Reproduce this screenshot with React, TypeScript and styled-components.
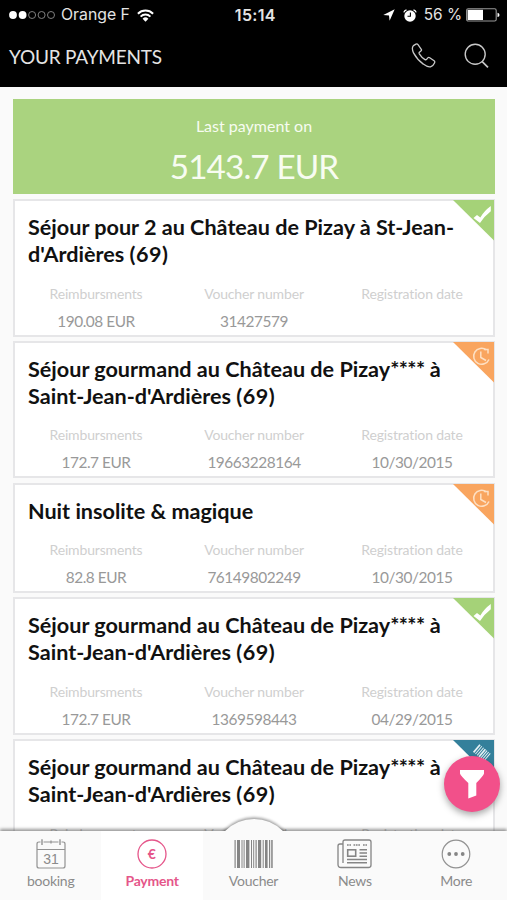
import React from "react";
import styled, { createGlobalStyle, css } from "styled-components";

const Global = createGlobalStyle`
  * { box-sizing: border-box; }
  body { margin: 0; background: #fafafa; font-family: Lato, "Open Sans", sans-serif; font-variant-ligatures: none; }
`;

const Screen = styled.div`
  width: 507px;
  height: 900px;
  display: flex;
  flex-direction: column;
  overflow: hidden;
  position: relative;
  background: #fafafa;
`;

const Header = styled.header`
  height: 87px;
  flex: none;
  background: #000;
  color: #e4e4e4;
`;

const StatusBar = styled.div`
  height: 30px;
  display: grid;
  grid-template-columns: 1fr auto 1fr;
  align-items: center;
  padding: 0 7px 0 9px;
  font-family: Inter, Roboto, sans-serif;
  font-size: 15.8px;
  line-height: 30px;
`;

const StatusGroup = styled.div<{ $end?: boolean }>`
  display: flex;
  align-items: center;
  justify-content: ${(p) => (p.$end ? "flex-end" : "flex-start")};
`;

const Carrier = styled.span`
  margin: 0 7px 0 5px;
  white-space: nowrap;
`;

const Clock = styled.span`
  font-weight: 600;
  font-size: 16px;
  letter-spacing: 0.3px;
  padding-left: 1.5px;
`;

const Percent = styled.span`
  margin: 0 4px 0 7px;
  font-size: 15.4px;
  white-space: nowrap;
`;

const TitleBar = styled.div`
  height: 54px;
  display: flex;
  align-items: center;
  padding: 0 18px 0 9px;
`;

const PageTitle = styled.h1`
  margin: 0;
  flex: 1;
  font-size: 19px;
  line-height: 24px;
  letter-spacing: -0.2px;
  font-weight: 400;
`;

const IconButton = styled.button`
  padding: 0;
  border: 0;
  background: none;
  display: flex;
  margin: -3px 0 0 28px;
`;

const Content = styled.main`
  flex: 1;
  min-height: 0;
  overflow: hidden;
  padding: 12px 12px 0 13px;
  display: flex;
  flex-direction: column;
`;

const Summary = styled.section`
  flex: none;
  height: 94.5px;
  margin-bottom: 5.5px;
  background: #aad37f;
  color: #f7fcf1;
  text-align: center;
  padding-top: 15px;
`;

const SummaryLabel = styled.div`
  font-size: 16px;
  line-height: 24px;
`;

const SummaryAmount = styled.div`
  font-size: 33.3px;
  line-height: 40px;
  letter-spacing: -0.9px;
  margin-top: 8px;
`;

const Card = styled.article`
  flex: none;
  position: relative;
  border: 2px solid #e6e6e8;
  background: #fff;
  padding: 13px 0 1px 13px;
  margin-bottom: 4.25px;
`;

const CardTitle = styled.h2`
  margin: 0 24px 0 0;
  font-size: 21.6px;
  line-height: 27px;
  font-weight: 700;
  color: #111;
  white-space: pre-line;
`;

const Stars = styled.span`
  letter-spacing: -0.6px;
`;

const Code = styled.span`
  letter-spacing: 0.5px;
`;

const Facts = styled.dl`
  margin: 11.5px 0 0;
  padding: 0 4px 0 0;
  display: grid;
  grid-template-columns: 136px 180px 136px;
  text-align: center;
`;

const Fact = styled.div`
  height: 54px;
`;

const FactLabel = styled.dt`
  font-size: 14px;
  line-height: 28px;
  letter-spacing: -0.16px;
  color: #cfcfcf;
  white-space: nowrap;
`;

const FactValue = styled.dd`
  margin: 0;
  font-size: 15.4px;
  line-height: 27px;
  letter-spacing: -0.45px;
  color: #999;
`;

const Corner = styled.svg`
  position: absolute;
  top: -1px;
  right: -1px;
`;

const FilterButton = styled.button`
  position: absolute;
  left: 444px;
  top: 756px;
  width: 56px;
  height: 56px;
  border: 0;
  padding: 0;
  border-radius: 50%;
  background: #f2508a;
  box-shadow: 0 3px 7px rgba(0, 0, 0, 0.35);
  display: flex;
  align-items: center;
  justify-content: center;
`;

const TabBar = styled.nav`
  flex: none;
  height: 69px;
  position: relative;
  display: grid;
  grid-template-columns: repeat(5, 1fr);
  background: #fafafa;
  box-shadow: 0 -2px 3px rgba(0, 0, 0, 0.4);
`;

const Bulge = styled.svg`
  position: absolute;
  left: 204px;
  top: -20px;
`;

const Tab = styled.a<{ $active?: boolean }>`
  position: relative;
  display: flex;
  flex-direction: column;
  align-items: center;
  padding-top: 8px;
  font-size: 14px;
  line-height: 20px;
  letter-spacing: -0.25px;
  color: #8b8b8b;
  ${(p) =>
    p.$active &&
    css`
      background: #fff;
      color: #e5568a;
      font-weight: 700;
    `}
`;

const TabLabel = styled.span`
  margin-top: 2px;
`;

type Status = "paid" | "pending" | "voucher";

const cornerColor: Record<Status, string> = {
  paid: "#a5d278",
  pending: "#f9a55f",
  voucher: "#34809b",
};

const StatusCorner = ({ status }: { status: Status }) => (
  <Corner width="41" height="41" viewBox="0 0 41 41">
    <path d="M0 0H41V40.5Z" fill={cornerColor[status]} />
    {status === "paid" && (
      <path d="M20.5 18L24 15L27.3 17.6Q31 11 37.8 6V11.2Q31.5 16 27 23Z" fill="#fff" />
    )}
    {status === "pending" && (
      <g fill="none" stroke="#fde0c4" strokeWidth="1.5">
        <path d="M33.4 7.8A8 8 0 1 0 36 17.5" />
        <path d="M30.8 7.6H35V11.6M27.8 9.5V15.5L33 18.5" />
      </g>
    )}
    {status === "voucher" && (
      <g stroke="#e5f1f5" transform="translate(28.7 12.7) rotate(40)">
        <path d="M-6.4 -5V5M0.6 -5V5" strokeWidth="1.7" />
        <path d="M-4 -5V5M-1.7 -5V5M2.8 -5V5M4.9 -5V5M7 -5V5" strokeWidth="1" />
      </g>
    )}
  </Corner>
);

interface Payment {
  title: string;
  amount: string;
  voucher: string;
  date: string;
  status: Status;
}

const gourmand = "Séjour gourmand au Château de Pizay**** à\nSaint-Jean-d'Ardières (69)";

const payments: Payment[] = [
  { title: "Séjour pour 2 au Château de Pizay à St-Jean-\nd'Ardières (69)", amount: "190.08 EUR", voucher: "31427579", date: "", status: "paid" },
  { title: gourmand, amount: "172.7 EUR", voucher: "19663228164", date: "10/30/2015", status: "pending" },
  { title: "Nuit insolite & magique", amount: "82.8 EUR", voucher: "76149802249", date: "10/30/2015", status: "pending" },
  { title: gourmand, amount: "172.7 EUR", voucher: "1369598443", date: "04/29/2015", status: "paid" },
  { title: gourmand, amount: "", voucher: "", date: "", status: "voucher" },
];

const formatTitle = (title: string) =>
  title.split(/(\*{4}|\(69\))/).map((part, i) => {
    if (part === "****") return <Stars key={i}>{part}</Stars>;
    if (part === "(69)") return <Code key={i}>{part}</Code>;
    return part;
  });

const PaymentCard = ({ title, amount, voucher, date, status }: Payment) => (
  <Card>
    <CardTitle>{formatTitle(title)}</CardTitle>
    <Facts>
      <Fact>
        <FactLabel>Reimbursments</FactLabel>
        <FactValue>{amount}</FactValue>
      </Fact>
      <Fact>
        <FactLabel>Voucher number</FactLabel>
        <FactValue>{voucher}</FactValue>
      </Fact>
      <Fact>
        <FactLabel>Registration date</FactLabel>
        <FactValue>{date}</FactValue>
      </Fact>
    </Facts>
    <StatusCorner status={status} />
  </Card>
);

const Signal = () => (
  <svg width="47" height="10" viewBox="0 0 47 10">
    <circle cx="4" cy="5" r="3.9" fill="#fff" />
    <circle cx="13.6" cy="5" r="3.9" fill="#fff" />
    {[23.1, 32.6, 42].map((x) => (
      <circle key={x} cx={x} cy="5" r="3.5" fill="none" stroke="#8c8c8c" strokeWidth="0.9" />
    ))}
  </svg>
);

const Wifi = () => (
  <svg width="17" height="13" viewBox="0 0 17 13">
    <g fill="none" stroke="#fff" strokeWidth="2">
      <path d="M0.9 4.7A10.8 10.8 0 0 1 16.1 4.7" />
      <path d="M3.6 7.6A7 7 0 0 1 13.4 7.6" />
    </g>
    <path d="M8.5 12.8L5.6 9.8A4.1 4.1 0 0 1 11.4 9.8Z" fill="#fff" />
  </svg>
);

const Location = () => (
  <svg width="12" height="12" viewBox="0 0 12 12">
    <path d="M0.3 6.1L11.7 0.3L6.6 11.7L6 6.4Z" fill="#fff" />
  </svg>
);

const AlarmSvg = styled.svg`
  margin-left: 8px;
`;

const Alarm = () => (
  <AlarmSvg width="14" height="13" viewBox="0 0 14 13">
    <circle cx="7" cy="7" r="5.7" fill="#fff" />
    <path d="M0.8 3.4Q1.5 1.4 3.5 0.9M13.2 3.4Q12.5 1.4 10.5 0.9" stroke="#fff" strokeWidth="1.3" fill="none" />
    <path d="M7.4 3.5V7.3H4.5" stroke="#000" strokeWidth="1.1" fill="none" />
  </AlarmSvg>
);

const Battery = () => (
  <svg width="34" height="14" viewBox="0 0 34 14">
    <rect x="0.6" y="0.8" width="29.6" height="12.2" rx="1.6" fill="none" stroke="#999" strokeWidth="1.1" />
    <rect x="1.6" y="1.8" width="15.4" height="10.2" fill="#fff" />
    <path d="M31.5 4.7Q33.5 5.1 33.5 6.9T31.5 9.1Z" fill="#fff" />
  </svg>
);

const Phone = () => (
  <svg width="25" height="25" viewBox="0 0 25 25" fill="none" stroke="#c8c8c8" strokeWidth="1.3" strokeLinejoin="round">
    <path d="M2.4 2.6L5 1.1Q6.2 0.6 7 1.7L10.3 6.3Q10.9 7.3 9.9 8.1L8.4 9.3Q7.8 9.9 8.3 10.8Q10.7 14.6 14 16.6Q15 17.1 15.6 16.3L16.8 14.9Q17.6 14.1 18.7 14.7L23.1 17.8Q24.2 18.7 23.5 19.9Q22.2 22.9 19.5 23.8Q16.6 24.4 12.3 21.1Q6.1 16.6 2.5 9.9Q0.3 5.1 2.4 2.6Z" />
  </svg>
);

const Search = () => (
  <svg width="25" height="25" viewBox="0 0 25 25" fill="none" stroke="#c8c8c8" strokeWidth="1.4">
    <circle cx="11.2" cy="11.3" r="10" />
    <path d="M18 18.4L24 24.3" strokeWidth="1.7" />
  </svg>
);

const Funnel = () => (
  <svg width="26" height="30" viewBox="0 0 26 30">
    <path d="M1 1H25V4.4Q24.5 6.5 17.3 14V26.5L9.3 29.5V14Q1.5 6.5 1 4.4Z" fill="#fff" />
  </svg>
);

const CalendarIcon = () => (
  <svg width="30" height="30" viewBox="0 0 30 30" fill="none" stroke="#929292" strokeWidth="1.2">
    <path d="M4.5 3H3Q1 3 1 5V27Q1 29 3 29H27Q29 29 29 27V5Q29 3 27 3H25.5M7.5 3H22.5M1 10.5H29" />
    <path d="M6 0.3V6M24 0.3V6" strokeWidth="1.4" />
    <path d="M15 1.5V4.5" />
    <text x="15" y="24.7" textAnchor="middle" fill="#8b8b8b" stroke="none" fontFamily="Liberation Sans, sans-serif" fontSize="14" letterSpacing="0">31</text>
  </svg>
);

const EuroIcon = () => (
  <svg width="30" height="30" viewBox="0 0 30 30">
    <circle cx="15" cy="15" r="14" fill="none" stroke="#e5568a" strokeWidth="1.3" />
    <text x="14.7" y="19.8" textAnchor="middle" fill="#e5568a" fontFamily="Lato, sans-serif" fontWeight="700" fontSize="14" letterSpacing="0">€</text>
  </svg>
);

const bars: [number, number][] = [
  [0.5, 1.2], [3, 3], [7.5, 1], [9.6, 1], [12, 3.4], [17, 1], [19.2, 1], [21.5, 1.2], [24, 3.2], [28.7, 1], [31, 2.6], [35, 1.2], [37.2, 1.5],
];

const BarcodeIcon = () => (
  <svg width="39" height="30" viewBox="0 0 39 30" fill="#858585">
    {bars.map(([x, w]) => (
      <rect key={x} x={x} y="1" width={w} height="28" />
    ))}
  </svg>
);

const NewsIcon = () => (
  <svg width="35" height="30" viewBox="0 0 35 30" fill="none" stroke="#858585" strokeWidth="1.3">
    <path d="M6 24V3Q6 1 8 1H32Q34 1 34 3V26Q34 28.5 31.5 28.5H4Q1 28.5 1 25.5V7Q1 5 3 5H6" />
    <path d="M10 6H14M16.5 6H23.5M26 6H30" strokeWidth="1.3" strokeDasharray="1.7 0.7" />
    <rect x="10.7" y="10.8" width="8" height="6.4" strokeWidth="1.6" />
    <path d="M22.5 10.8H30M22.5 14H30M22.5 17.2H30M10 20.5H30M10 23.7H30" strokeWidth="1.4" />
  </svg>
);

const MoreIcon = () => (
  <svg width="30" height="30" viewBox="0 0 30 30">
    <circle cx="15" cy="15" r="13.8" fill="none" stroke="#929292" strokeWidth="1.2" />
    {[8.3, 15, 21.7].map((x) => (
      <circle key={x} cx={x} cy="15" r="1.9" fill="#858585" />
    ))}
  </svg>
);

const tabs = [
  { label: "booking", Icon: CalendarIcon },
  { label: "Payment", Icon: EuroIcon, active: true },
  { label: "Voucher", Icon: BarcodeIcon },
  { label: "News", Icon: NewsIcon },
  { label: "More", Icon: MoreIcon },
];

export default function App() {
  return (
    <Screen>
      <Global />
      <Header>
        <StatusBar>
          <StatusGroup>
            <Signal />
            <Carrier>Orange F</Carrier>
            <Wifi />
          </StatusGroup>
          <Clock>15:14</Clock>
          <StatusGroup $end>
            <Location />
            <Alarm />
            <Percent>56 %</Percent>
            <Battery />
          </StatusGroup>
        </StatusBar>
        <TitleBar>
          <PageTitle>YOUR PAYMENTS</PageTitle>
          <IconButton aria-label="Call"><Phone /></IconButton>
          <IconButton aria-label="Search"><Search /></IconButton>
        </TitleBar>
      </Header>
      <Content>
        <Summary>
          <SummaryLabel>Last payment on</SummaryLabel>
          <SummaryAmount>5143.7 EUR</SummaryAmount>
        </Summary>
        {payments.map((p, i) => (
          <PaymentCard key={i} {...p} />
        ))}
      </Content>
      <TabBar>
        <Bulge width="102" height="40" viewBox="0 0 102 40">
          <defs>
            <filter id="soft" x="-20%" y="-20%" width="140%" height="140%">
              <feGaussianBlur stdDeviation="1.5" />
            </filter>
            <clipPath id="above"><rect width="102" height="20" /></clipPath>
          </defs>
          <g clipPath="url(#above)">
            <circle cx="50" cy="47" r="40.5" fill="#000" opacity="0.4" filter="url(#soft)" />
          </g>
          <circle cx="50" cy="48.5" r="40.5" fill="#fafafa" />
        </Bulge>
        {tabs.map(({ label, Icon, active }) => (
          <Tab key={label} $active={active}>
            <Icon />
            <TabLabel>{label}</TabLabel>
          </Tab>
        ))}
      </TabBar>
      <FilterButton aria-label="Filter"><Funnel /></FilterButton>
    </Screen>
  );
}
